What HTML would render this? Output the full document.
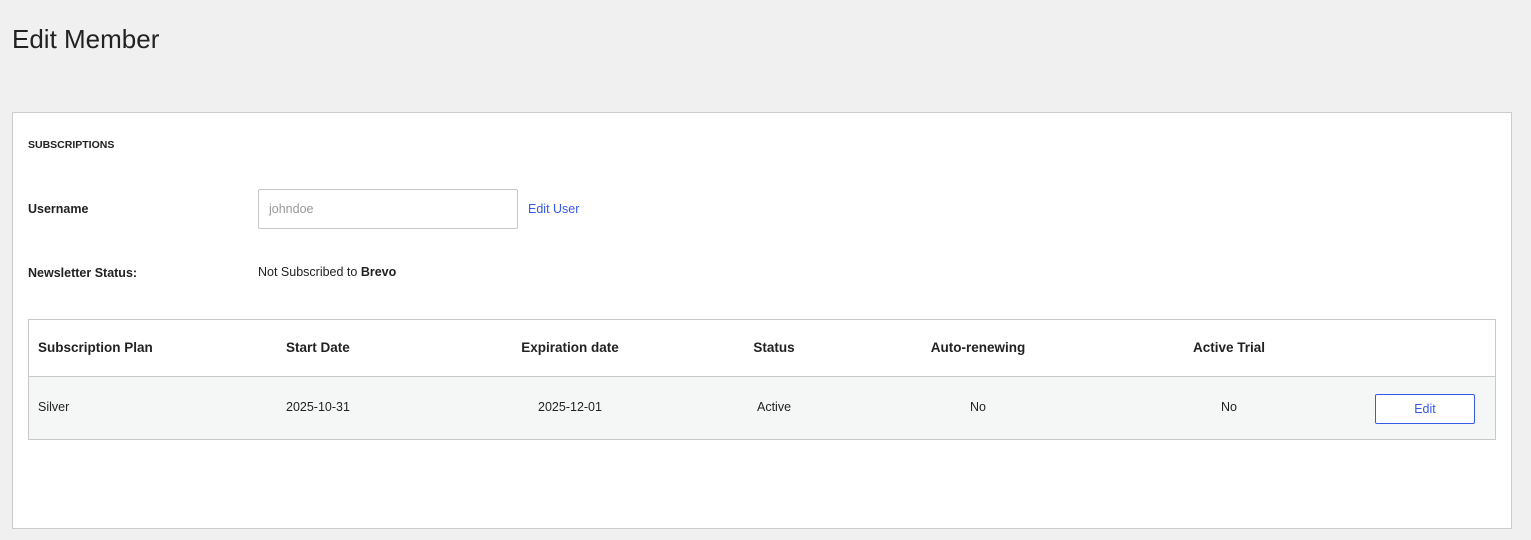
<!DOCTYPE html>
<html><head><meta charset="utf-8"><style>
*{margin:0;padding:0;box-sizing:border-box}
body{width:1531px;height:540px;background:#f0f0f0;font-family:"Liberation Sans",sans-serif;color:#222;position:relative;overflow:hidden}
.a{position:absolute;white-space:nowrap;font-size:12.5px}
.c{transform:translateX(-50%)}
.b{font-weight:bold}
.h{font-size:13.5px}
</style></head><body>
<div class="a" style="left:12px;top:24px;font-size:26px;color:#222">Edit Member</div>
<div style="position:absolute;left:12px;top:112px;width:1500px;height:417px;background:#fff;border:1px solid #ccc"></div>
<div class="a b" style="left:28px;top:139px;font-size:10.5px">SUBSCRIPTIONS</div>
<div class="a b" style="left:28px;top:202px">Username</div>
<div style="position:absolute;left:258px;top:189px;width:260px;height:40px;border:1px solid #c8c8c8;border-radius:2px;background:#fff"></div>
<div class="a" style="left:269px;top:202px;color:#999">johndoe</div>
<div class="a" style="left:528px;top:202px;color:#3858e9">Edit User</div>
<div class="a b" style="left:28px;top:266px">Newsletter Status:</div>
<div class="a" style="left:258px;top:265px">Not Subscribed to <b>Brevo</b></div>
<div style="position:absolute;left:28px;top:319px;width:1468px;height:121px;border:1px solid #c8c8c8;background:#fff"></div>
<div style="position:absolute;left:29px;top:376px;width:1466px;height:63px;background:#f5f6f6;border-top:1px solid #c8c8c8"></div>
<div class="a b h" style="left:38px;top:340px">Subscription Plan</div>
<div class="a b h" style="left:286px;top:340px">Start Date</div>
<div class="a b c h" style="left:570px;top:340px">Expiration date</div>
<div class="a b c h" style="left:774px;top:340px">Status</div>
<div class="a b c h" style="left:978px;top:340px">Auto-renewing</div>
<div class="a b c h" style="left:1229px;top:340px">Active Trial</div>
<div class="a" style="left:38px;top:400px">Silver</div>
<div class="a" style="left:286px;top:400px">2025-10-31</div>
<div class="a c" style="left:570px;top:400px">2025-12-01</div>
<div class="a c" style="left:774px;top:400px">Active</div>
<div class="a c" style="left:978px;top:400px">No</div>
<div class="a c" style="left:1229px;top:400px">No</div>
<div style="position:absolute;left:1375px;top:394px;width:100px;height:30px;border:1px solid #3858e9;border-radius:2px;background:#fff;color:#3858e9;font-size:12.5px;text-align:center;line-height:28px">Edit</div>
</body></html>
